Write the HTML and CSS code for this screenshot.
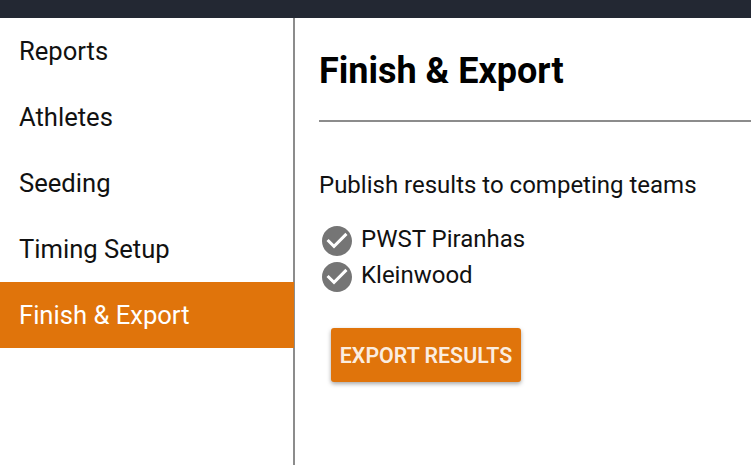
FILE: index.html
```html
<!DOCTYPE html>
<html>
<head>
    <title>Finish &amp; Export</title>
    <link rel="stylesheet" href="styles.css">
</head>
<body>
    <div class="topbar"></div>
    <div class="layout">
        <div class="sidebar">
            <div class="nav-item">Reports</div>
            <div class="nav-item">Athletes</div>
            <div class="nav-item">Seeding</div>
            <div class="nav-item">Timing Setup</div>
            <div class="nav-item active">Finish &amp; Export</div>
        </div>
        <div class="content">
            <h1 class="title">Finish &amp; Export</h1>
            <hr class="divider">
            <p class="intro">Publish results to competing teams</p>
            <div class="teams">
                <div class="team">
                    <svg class="check" viewBox="0 0 24 24"><path d="M12 2C6.48 2 2 6.48 2 12s4.48 10 10 10 10-4.48 10-10S17.52 2 12 2zm-2 15l-5-5 1.41-1.41L10 14.17l7.59-7.59L19 8l-9 9z"/></svg>
                    <span>PWST Piranhas</span>
                </div>
                <div class="team">
                    <svg class="check" viewBox="0 0 24 24"><path d="M12 2C6.48 2 2 6.48 2 12s4.48 10 10 10 10-4.48 10-10S17.52 2 12 2zm-2 15l-5-5 1.41-1.41L10 14.17l7.59-7.59L19 8l-9 9z"/></svg>
                    <span>Kleinwood</span>
                </div>
            </div>
            <button class="export">Export Results</button>
        </div>
    </div>
</body>
</html>
```

FILE: styles.css
```css
html, body {
    height: 100%;
}

body {
    font-family: Roboto, sans-serif;
    margin: 0;
    display: flex;
    flex-direction: column;
    overflow: hidden;
    background-color: #fff;
    color: #111;
}

.topbar {
    height: 18px;
    background-color: #232833;
}

.layout {
    flex: 1;
    display: flex;
}

.sidebar {
    box-sizing: border-box;
    flex: 0 0 295px;
    border-right: 2px solid #8c8c8c;
}

.nav-item {
    height: 66px;
    line-height: 66px;
    padding-left: 19px;
    font-size: 25.6px;
}

.active {
    margin-right: -1px;
    background-color: #e0740b;
    color: #fff;
}

.content {
    flex: 1;
    padding-left: 24px;
}

.title {
    margin: 0;
    padding-top: 32px;
    height: 42px;
    line-height: 42px;
    font-size: 36px;
    font-weight: 700;
    color: #000;
}

.divider {
    margin: 28px 0 0;
    border: 0;
    border-top: 2px solid #8c8c8c;
}

.intro {
    margin: 0;
    padding-top: 49px;
    line-height: 28px;
    font-size: 24px;
}

.teams {
    margin-top: 22px;
}

.team {
    display: flex;
    align-items: center;
    gap: 6px;
    height: 36px;
    font-size: 24px;
}

.check {
    width: 36px;
    height: 36px;
    margin-top: 4px;
    fill: #757575;
}

.export {
    display: block;
    margin: 35px 0 0 12px;
    width: 190px;
    height: 54px;
    border: 0;
    border-radius: 3px;
    background-color: #e0740b;
    color: rgba(255, 255, 255, 0.88);
    font-family: Roboto, sans-serif;
    font-size: 21.33px;
    font-weight: 600;
    text-transform: uppercase;
    padding: 0;
    box-shadow: 0 2px 4px rgba(0, 0, 0, 0.35);
}
```
